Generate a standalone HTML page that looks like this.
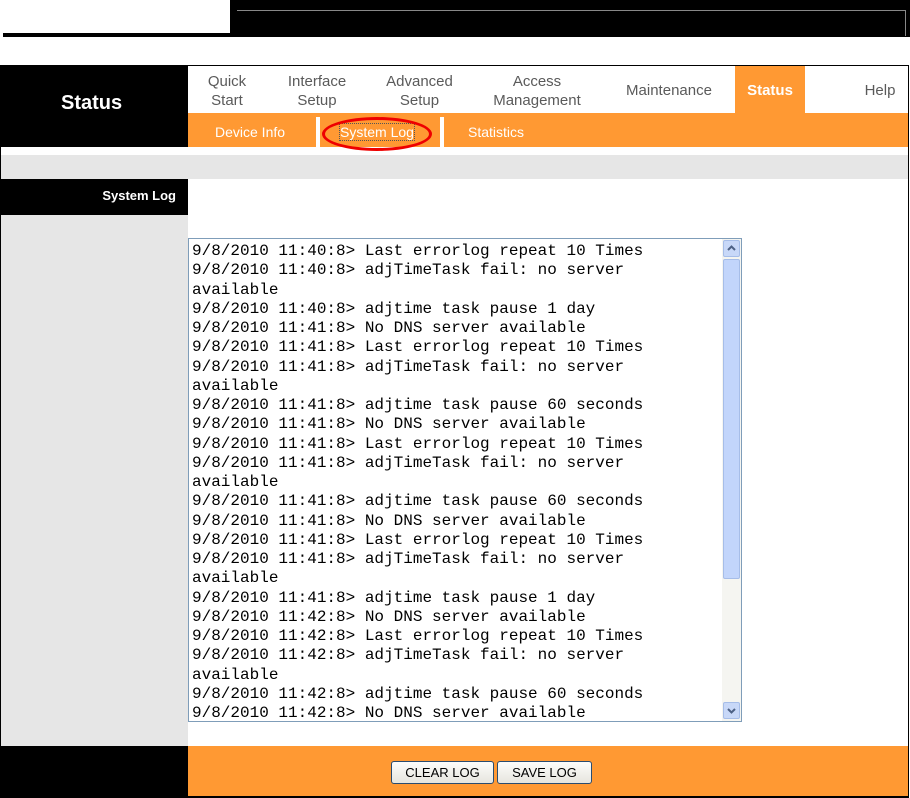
<!DOCTYPE html>
<html><head><style>
*{margin:0;padding:0;box-sizing:border-box}
body{width:910px;height:798px;background:#fff;position:relative;overflow:hidden;font-family:"Liberation Sans",Arial,sans-serif}
.a{position:absolute}
.nav{position:absolute;top:72px;font-size:15px;color:#5a5a5a;text-align:center;line-height:19px;font-family:"Liberation Sans",sans-serif}
.sub{position:absolute;top:124px;font-size:14px;color:#fff}
pre{font-family:"Liberation Mono","Courier New",monospace;font-size:16px;line-height:19.25px;color:#000}
.btn{position:absolute;top:761px;height:23px;background:linear-gradient(#fdfdfb,#e6e5de);border:1px solid #2a4c70;border-radius:3px;font-size:13px;text-align:center;line-height:21px;color:#000}
.arr{position:absolute;left:534px;width:17px;height:17px;background:#c8d8f8;border:1px solid #a6bde8;border-radius:2px}
</style></head><body>
<div class="a" style="left:3px;top:33px;width:228px;height:4px;background:#000"></div>
<div class="a" style="left:230px;top:0;width:680px;height:37px;background:#000"></div>
<div class="a" style="left:237px;top:10px;width:669px;height:26px;border-top:1px solid #888;border-right:1px solid #888"></div>

<div class="a" style="left:0;top:65px;width:909px;height:733px;border:1px solid #000;border-bottom:2px solid #000"></div>
<div class="a" style="left:0;top:65px;width:188px;height:82px;background:#000"></div>
<div class="a" style="left:61px;top:92px;font-size:20px;font-weight:bold;color:#fff">Status</div>
<div class="a" style="left:188px;top:113px;width:720px;height:34px;background:#ff9933"></div>
<div class="a" style="left:735px;top:66px;width:70px;height:47px;background:#ff9933"></div>
<div class="nav" style="left:196px;width:62px">Quick<br>Start</div>
<div class="nav" style="left:280px;width:74px">Interface<br>Setup</div>
<div class="nav" style="left:377px;width:85px">Advanced<br>Setup</div>
<div class="nav" style="left:483px;width:108px">Access<br>Management</div>
<div class="nav" style="left:618px;width:102px;top:81px">Maintenance</div>
<div class="nav" style="left:744px;width:52px;top:81px;color:#fff;font-weight:bold">Status</div>
<div class="nav" style="left:860px;width:40px;top:81px">Help</div>
<div class="a" style="left:316px;top:117px;width:4px;height:30px;background:#fff"></div>
<div class="a" style="left:440px;top:117px;width:4px;height:30px;background:#fff"></div>
<div class="sub" style="left:215px">Device Info</div>
<div class="sub" style="left:340px;outline:1px dotted #555">System Log</div>
<div class="sub" style="left:468px">Statistics</div>
<div class="a" style="left:322px;top:117px;width:110px;height:34px;border:3px solid #e00;border-radius:50%"></div>

<div class="a" style="left:1px;top:155px;width:907px;height:24px;background:#e6e6e6"></div>
<div class="a" style="left:0;top:179px;width:188px;height:36px;background:#000"></div>
<div class="a" style="left:0;top:188px;width:176px;text-align:right;font-size:13px;font-weight:bold;color:#fff">System Log</div>
<div class="a" style="left:1px;top:215px;width:187px;height:531px;background:#e6e6e6"></div>

<div class="a" style="left:188px;top:238px;width:554px;height:484px;border:1px solid #7f9db9;background:#fff;overflow:hidden">
<pre style="position:absolute;left:3px;top:3px">9/8/2010 11:40:8&gt; Last errorlog repeat 10 Times
9/8/2010 11:40:8&gt; adjTimeTask fail: no server
available
9/8/2010 11:40:8&gt; adjtime task pause 1 day
9/8/2010 11:41:8&gt; No DNS server available
9/8/2010 11:41:8&gt; Last errorlog repeat 10 Times
9/8/2010 11:41:8&gt; adjTimeTask fail: no server
available
9/8/2010 11:41:8&gt; adjtime task pause 60 seconds
9/8/2010 11:41:8&gt; No DNS server available
9/8/2010 11:41:8&gt; Last errorlog repeat 10 Times
9/8/2010 11:41:8&gt; adjTimeTask fail: no server
available
9/8/2010 11:41:8&gt; adjtime task pause 60 seconds
9/8/2010 11:41:8&gt; No DNS server available
9/8/2010 11:41:8&gt; Last errorlog repeat 10 Times
9/8/2010 11:41:8&gt; adjTimeTask fail: no server
available
9/8/2010 11:41:8&gt; adjtime task pause 1 day
9/8/2010 11:42:8&gt; No DNS server available
9/8/2010 11:42:8&gt; Last errorlog repeat 10 Times
9/8/2010 11:42:8&gt; adjTimeTask fail: no server
available
9/8/2010 11:42:8&gt; adjtime task pause 60 seconds
9/8/2010 11:42:8&gt; No DNS server available</pre>
<div class="a" style="left:533px;top:0;width:19px;height:482px;background:#f5f5f1"></div>
<div class="arr" style="top:1px"><svg width="15" height="15"><path d="M4 9 L7.5 5.5 L11 9" fill="none" stroke="#4d6185" stroke-width="2"/></svg></div>
<div class="a" style="left:534px;top:20px;width:17px;height:320px;background:#c2d5fb;border:1px solid #a6bde8;border-radius:2px"></div>
<div class="arr" style="top:463px"><svg width="15" height="15"><path d="M4 6 L7.5 9.5 L11 6" fill="none" stroke="#4d6185" stroke-width="2"/></svg></div>
</div>

<div class="a" style="left:1px;top:746px;width:907px;height:50px;background:#ff9933"></div>
<div class="a" style="left:1px;top:746px;width:187px;height:50px;background:#000"></div>
<div class="btn" style="left:391px;width:103px">CLEAR LOG</div>
<div class="btn" style="left:497px;width:95px">SAVE LOG</div>
</body></html>
